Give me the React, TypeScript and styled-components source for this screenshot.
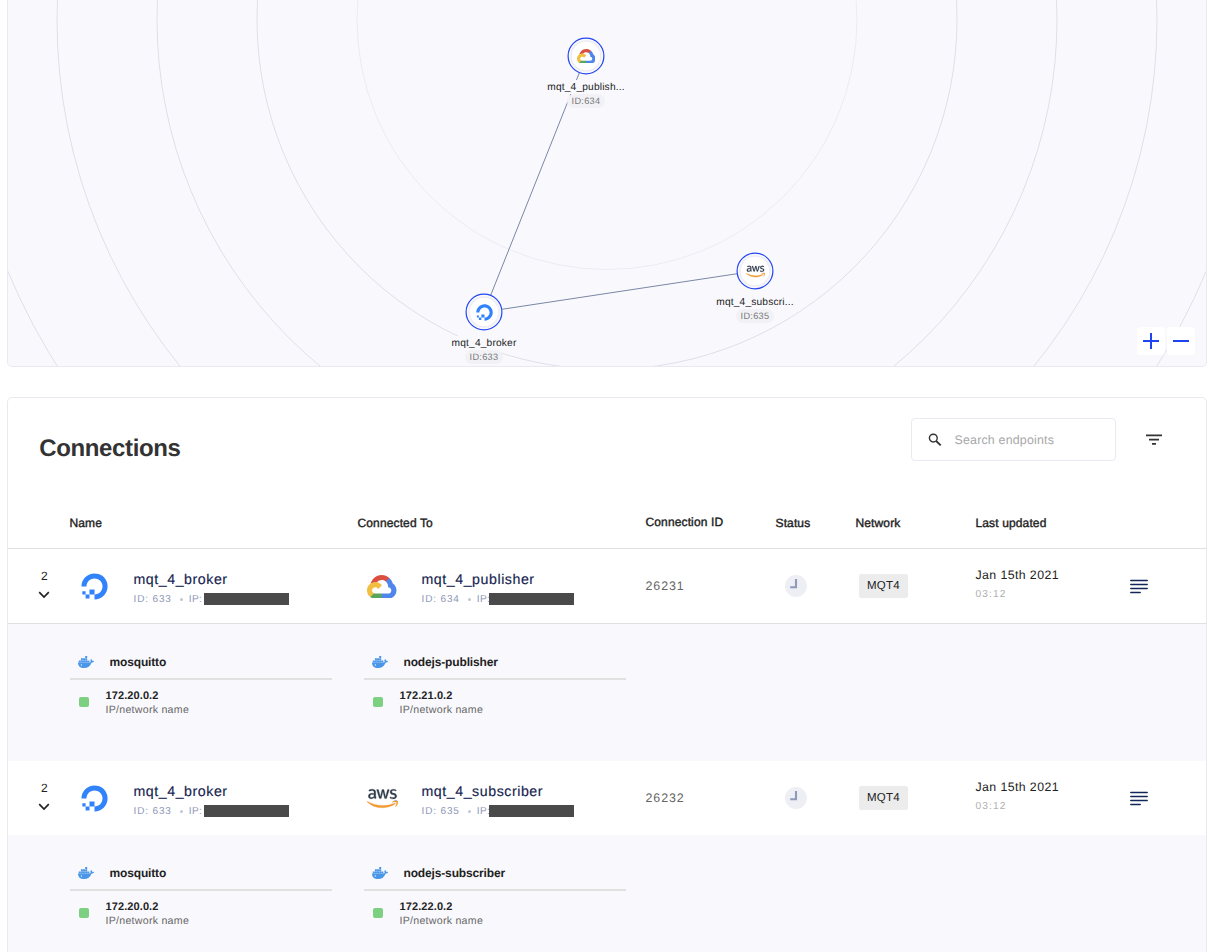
import React from "react";
import styled, { createGlobalStyle } from "styled-components";
import { FaAws, FaDigitalOcean } from "react-icons/fa";

const GlobalStyle = createGlobalStyle`
  * { box-sizing: border-box; }
  html, body { margin: 0; height: 100%; overflow: hidden; background: #fff; }
  body {
    font-family: "Liberation Sans", Arial, sans-serif;
    color: #222;
    text-rendering: geometricPrecision;
  }
`;

const Page = styled.main`
  width: 1218px;
  height: 952px;
  overflow: hidden;
  padding-left: 7px;
  display: flex;
  flex-direction: column;
  gap: 30px;
`;

/* ---------- topology map ---------- */

const MapPanel = styled.section`
  position: relative;
  flex: none;
  width: 1200px;
  height: 367px;
  background: #f9f9fd;
  border: 1px solid #e9e9f2;
  border-top: 0;
  border-radius: 0 0 5px 5px;
  overflow: hidden;
`;

const MapCanvas = styled.svg`
  display: block;
  width: 1198px;
  height: 366px;
`;

const MapNode = styled.div<{ $x: number; $y: number }>`
  position: absolute;
  left: ${(p) => p.$x - 50}px;
  top: ${(p) => p.$y - 18.5}px;
  width: 100px;
  display: flex;
  flex-direction: column;
  align-items: center;
`;

const NodeCircle = styled.svg`
  display: block;
  width: 38px;
  height: 38px;
`;

const NodeBadge = styled.div`
  display: grid;
  width: 38px;
  height: 38px;
  align-items: center;
  justify-items: center;

  > * { grid-area: 1 / 1; }
`;

const NodeLabel = styled.div`
  margin-top: 5px;
  height: 14px;
  line-height: 15px;
  font-size: 10.2px;
  letter-spacing: 0.17px;
  white-space: nowrap;
  background: #f9f9fd;
  color: #222;
`;

const NodeId = styled.div`
  height: 14px;
  line-height: 14px;
  padding: 0 5px;
  border-radius: 7px;
  background: #f2f2f6;
  color: #777;
  font-size: 9.2px;
  letter-spacing: 0.3px;
`;

const ZoomControls = styled.div`
  position: absolute;
  right: 11px;
  bottom: 11px;
  display: flex;
  gap: 2px;
`;

const ZoomButton = styled.button`
  width: 28px;
  height: 28px;
  padding: 0;
  border: 0;
  border-radius: 4px;
  background: #fff;
  display: flex;
  align-items: center;
  justify-content: center;
`;

/* ---------- connections card ---------- */

const Card = styled.section`
  flex: none;
  width: 1200px;
  height: 600px;
  border: 1px solid #e9e9f2;
  border-radius: 5px;
  background: #fff;
`;

const CardHeader = styled.header`
  height: 100px;
  padding: 20px 44px 0 31.3px;
  display: flex;
  align-items: flex-start;
`;

const Title = styled.h2`
  margin: 16px auto 0 0;
  font-size: 24px;
  line-height: 30px;
  letter-spacing: -0.38px;
  color: #333;
`;

const SearchBox = styled.div`
  width: 205px;
  height: 43px;
  border: 1px solid #e9e9f2;
  border-radius: 4px;
  display: flex;
  align-items: center;
  padding-left: 16px;
  gap: 12.5px;
  font-size: 12.4px;
  letter-spacing: 0.2px;
  color: #a8a8a8;
`;

const FilterIcon = styled.svg`
  margin: 16px 0 0 30px;
`;

const rowGrid = `
  display: grid;
  grid-template-columns: 61.5px 288px 288px 130px 80px 120px 1fr;
`;

const HeadRow = styled.div`
  ${rowGrid}
  height: 51px;
  border-bottom: 1px solid #e0e0e0;
`;

const HeadCell = styled.div<{ $raise?: boolean }>`
  padding-top: ${(p) => (p.$raise ? 17 : 18)}px;
  font-size: 12px;
  line-height: 14px;
  letter-spacing: 0.13px;
  color: #1f1f1f;
  -webkit-text-stroke: 0.4px #1f1f1f;
`;

const Row = styled.div<{ $line?: boolean }>`
  ${rowGrid}
  height: ${(p) => (p.$line ? 75 : 74)}px;
  border-bottom: ${(p) => (p.$line ? "1px solid #e0e0e0" : "0")};
`;

const Toggle = styled.div`
  padding: 20px 0 0 24px;
  width: 48.5px;
  display: flex;
  flex-direction: column;
  align-items: center;
  gap: 8px;
  font-size: 12px;
  line-height: 14px;
  margin-right: auto;
`;

const Endpoint = styled.div`
  display: flex;
`;

const LogoSlot = styled.div`
  width: 48px;
  height: 75px;
  padding-left: 1px;
  display: flex;
  align-items: center;
  justify-content: center;
`;

const EndpointText = styled.div`
  padding: 23px 0 0 16px;
`;

const EndpointName = styled.div`
  font-size: 14.2px;
  line-height: 16px;
  letter-spacing: 0.55px;
  color: #14234f;
  -webkit-text-stroke: 0.15px #14234f;
`;

const EndpointMeta = styled.div`
  display: flex;
  align-items: center;
  height: 14px;
  margin-top: 4px;
  font-size: 10px;
  letter-spacing: 0.85px;
  white-space: pre;
  color: #8d97b5;
`;

const Dot = styled.i`
  width: 3px;
  height: 3px;
  border-radius: 50%;
  background: #c4c7d0;
  margin: 0 6px 0 8px;
`;

const MetaIp = styled.span`
  width: 15.5px;
  letter-spacing: 0.45px;
`;

const Redaction = styled.span<{ $gap: number }>`
  width: 85px;
  height: 12px;
  margin-left: ${(p) => p.$gap}px;
  background: #4a4a4a;
`;

const ConnectionId = styled.div`
  padding-top: 30px;
  font-size: 12.4px;
  line-height: 14px;
  letter-spacing: 0.95px;
  color: #666;
`;

const StatusCell = styled.div`
  padding: 26px 0 0 9.5px;
`;

const NetworkCell = styled.div`
  padding: 25px 0 0 3.5px;
`;

const NetworkTag = styled.span`
  display: block;
  width: 49px;
  height: 24px;
  border-radius: 2px;
  background: #ececec;
  font-size: 11.5px;
  line-height: 25px;
  letter-spacing: 0.3px;
  text-align: center;
`;

const Updated = styled.div`
  display: flex;
  padding-top: 19px;
`;

const UpdatedText = styled.div`
  width: 154.5px;
`;

const UpdatedDate = styled.div`
  font-size: 12.3px;
  line-height: 14px;
  letter-spacing: 0.42px;
`;

const UpdatedTime = styled.div`
  margin-top: 6px;
  font-size: 10.2px;
  line-height: 14px;
  letter-spacing: 1.1px;
  color: #b0b0b0;
`;

const MenuIcon = styled.svg`
  margin-top: 11px;
`;

const Details = styled.div<{ $tall?: boolean }>`
  height: ${(p) => (p.$tall ? 137 : 140)}px;
  padding: 28px 0 0 62px;
  background: #f9f9fd;
  display: flex;
  gap: 32px;
`;

const Container = styled.div`
  width: 262px;
`;

const ContainerHead = styled.div`
  height: 28px;
  padding: 0 0 6px 8px;
  border-bottom: 2px solid #e1e1e1;
  display: flex;
  align-items: center;
  gap: 15.5px;
  font-size: 12px;
  font-weight: 700;
  letter-spacing: -0.15px;
  color: #222;
`;

const ContainerBody = styled.div`
  display: flex;
  padding: 9px 0 0 9px;
  gap: 16.5px;
`;

const HealthMark = styled.span`
  width: 10px;
  height: 10px;
  margin-top: 8px;
  border-radius: 2px;
  background: #7dcf82;
`;

const Address = styled.div`
  font-size: 11px;
  line-height: 14px;
  font-weight: 700;
  letter-spacing: 0.1px;
  color: #222;
`;

const AddressHint = styled.div`
  font-size: 10.6px;
  line-height: 14px;
  letter-spacing: 0.27px;
  color: #666;
`;

/* ---------- logos ---------- */

const AwsGlyph = styled(FaAws)`
  path {
    fill: url(#aws-two-tone);
    stroke: url(#aws-two-tone);
    stroke-width: 6px;
  }
`;

const DockerLogo = () => (
  <svg width="16" height="12" viewBox="0 0 16 12">
    <g fill="#4a96e8">
      <path d="M7.2 0h2v1.900h-2zM2.900 2.200h2v2h-2zM5.050 2.200h2v2h-2zM7.200 2.200h2v2h-2zM.750 4.400h2v2h-2zM2.900 4.400h2v2h-2zM5.050 4.400h2v2h-2zM7.200 4.400h2v2h-2zM9.350 4.400h2v2h-2z" />
      <path d="M0 6.500h11.200c.7 0 1.200-.2 1.600-.5-.6-.9-.5-2.100.2-3 .8.500 1.200 1.200 1.200 1.900.7-.1 1.300 0 1.800.3-.4 1-1.300 1.400-2.500 1.500C12.300 10.200 9.700 12 6 12 2.200 12 0 10.200 0 6.500z" />
    </g>
    <circle cx="3.4" cy="8.9" r=".6" fill="#fff" />
  </svg>
);

const GoogleCloudLogo = ({ size }: { size: number }) => (
  <svg width={size} height={size * 0.805} viewBox="0 0 256 206">
    <path fill="#db4f40" d="M170.25 56.82l22.25-22.25 1.49-9.37C153.44-11.68 88.98-7.5 52.42 33.92 42.27 45.42 34.73 59.76 30.72 74.57l7.97-1.12 44.5-7.34 3.44-3.51c19.8-21.74 53.27-24.67 76.13-6.17z" />
    <path fill="#5086ec" d="M224.2 73.92c-5.11-18.84-15.61-35.77-30.21-48.72l-31.23 31.23c13.18 10.77 20.7 27.01 20.38 44.03v5.55c15.35 0 27.8 12.44 27.8 27.8s-12.45 27.48-27.8 27.48h-55.67l-5.47 5.93v33.34l5.47 5.24h55.67c39.93.31 72.55-31.5 72.86-71.43.19-24.2-11.74-46.89-31.8-60.45" />
    <path fill="#58a55c" d="M71.87 205.8h55.6v-44.51h-55.6c-3.96 0-7.8-.85-11.4-2.5l-7.89 2.42-22.4 22.25-1.96 7.58c12.57 9.49 27.9 14.82 43.65 14.76" />
    <path fill="#f2be42" d="M71.87 61.43C31.94 61.66-.24 94.23 0 134.16c.13 22.3 10.55 43.29 28.22 56.88l32.25-32.25c-13.99-6.32-20.21-22.78-13.89-36.77 6.32-13.99 22.79-20.21 36.78-13.89 6.16 2.78 11.1 7.72 13.89 13.89l32.24-32.25C115.77 71.83 94.45 61.34 71.87 61.43" />
  </svg>
);

type Provider = "do" | "gcp" | "aws";

const ProviderLogo = ({ provider, small }: { provider: Provider; small?: boolean }) => {
  if (provider === "do") return <FaDigitalOcean size={small ? 17 : 27} color="#3183fc" />;
  if (provider === "gcp") return <GoogleCloudLogo size={small ? 18.5 : 29.5} />;
  return <AwsGlyph size={small ? 19 : 31} />;
};

/* ---------- data ---------- */

const nodes: { x: number; y: number; label: string; id: number; provider: Provider }[] = [
  { x: 578, y: 55.5, label: "mqt_4_publish...", id: 634, provider: "gcp" },
  { x: 747, y: 270.5, label: "mqt_4_subscri...", id: 635, provider: "aws" },
  { x: 476, y: 311.5, label: "mqt_4_broker", id: 633, provider: "do" },
];

const connections: {
  id: number;
  peer: { name: string; id: number; provider: Provider };
  containers: { name: string; ip: string }[];
}[] = [
  {
    id: 26231,
    peer: { name: "mqt_4_publisher", id: 634, provider: "gcp" },
    containers: [
      { name: "mosquitto", ip: "172.20.0.2" },
      { name: "nodejs-publisher", ip: "172.21.0.2" },
    ],
  },
  {
    id: 26232,
    peer: { name: "mqt_4_subscriber", id: 635, provider: "aws" },
    containers: [
      { name: "mosquitto", ip: "172.20.0.2" },
      { name: "nodejs-subscriber", ip: "172.22.0.2" },
    ],
  },
];

const EndpointCell = ({ name, id, provider, gap }: { name: string; id: number; provider: Provider; gap: number }) => (
  <Endpoint>
    <LogoSlot>
      <ProviderLogo provider={provider} />
    </LogoSlot>
    <EndpointText>
      <EndpointName>{name}</EndpointName>
      <EndpointMeta>
        <span>ID: {id}</span>
        <Dot />
        <MetaIp>IP:</MetaIp>
        <Redaction $gap={gap} />
      </EndpointMeta>
    </EndpointText>
  </Endpoint>
);

export default function App() {
  return (
    <Page>
      <GlobalStyle />
      <svg width="0" height="0" style={{ position: "absolute" }}>
        <defs>
          <linearGradient id="aws-two-tone" x1="0" y1="0" x2="0" y2="1">
            <stop offset="0.61" stopColor="#2f3a4a" />
            <stop offset="0.61" stopColor="#f29a33" />
          </linearGradient>
        </defs>
      </svg>

      <MapPanel>
        <MapCanvas viewBox="0 0 1198 366" fill="none">
          {[250, 350, 450, 550, 650].map((r) => (
            <circle key={r} cx="599" cy="19.5" r={r} stroke={r === 250 ? "#ebebf3" : "#dfdfea"} />
          ))}
          <path d="M578 56L476 312L747 271" stroke="#7b86a6" />
        </MapCanvas>
        {nodes.map((n) => (
          <MapNode key={n.id} $x={n.x} $y={n.y}>
            <NodeBadge>
              <NodeCircle viewBox="0 0 38 38">
                <circle cx="19" cy="19" r="17.9" fill="#f9f9fd" stroke="#2347f2" strokeWidth="1.2" />
                <circle cx="19" cy="19" r="15" fill="#fff" stroke="#ededf3" strokeWidth="1.5" />
              </NodeCircle>
              <ProviderLogo provider={n.provider} small />
            </NodeBadge>
            <NodeLabel>{n.label}</NodeLabel>
            <NodeId>ID:{n.id}</NodeId>
          </MapNode>
        ))}
        <ZoomControls>
          <ZoomButton aria-label="Zoom in">
            <svg width="16" height="16" stroke="#1d44ee" strokeWidth="2">
              <path d="M0 8h16M8 0v16" />
            </svg>
          </ZoomButton>
          <ZoomButton aria-label="Zoom out">
            <svg width="16" height="16" stroke="#1d44ee" strokeWidth="2">
              <path d="M0 8h16" />
            </svg>
          </ZoomButton>
        </ZoomControls>
      </MapPanel>

      <Card>
        <CardHeader>
          <Title>Connections</Title>
          <SearchBox>
            <svg width="14" height="14" viewBox="0 0 14 14" fill="none" stroke="#333" strokeWidth="1.4">
              <circle cx="5.3" cy="5.1" r="3.9" />
              <path d="M8.2 8L12.7 12.4" strokeWidth="1.8" />
            </svg>
            Search endpoints
          </SearchBox>
          <FilterIcon width="16" height="11" stroke="#333" strokeWidth="1.7">
            <path d="M0 1.3h16M3 5.6h10M6 9.8h4" />
          </FilterIcon>
        </CardHeader>

        <HeadRow>
          <span />
          <HeadCell>Name</HeadCell>
          <HeadCell>Connected To</HeadCell>
          <HeadCell $raise>Connection ID</HeadCell>
          <HeadCell>Status</HeadCell>
          <HeadCell>Network</HeadCell>
          <HeadCell>Last updated</HeadCell>
        </HeadRow>

        {connections.map((c, i) => (
          <React.Fragment key={c.id}>
            <Row $line={i === 0}>
              <Toggle>
                2
                <svg width="12" height="8" fill="none" stroke="#222" strokeWidth="1.7">
                  <path d="M1.2 1.2L6 6L10.8 1.2" />
                </svg>
              </Toggle>
              <EndpointCell name="mqt_4_broker" id={633} provider="do" gap={0} />
              <EndpointCell {...c.peer} gap={-3} />
              <ConnectionId>{c.id}</ConnectionId>
              <StatusCell>
                <svg width="22" height="22" fill="none">
                  <circle cx="11" cy="11" r="11" fill="#eeeef5" />
                  <path d="M11 4v8.200H5.200" stroke="#8f9bb8" strokeWidth="2.1" />
                </svg>
              </StatusCell>
              <NetworkCell>
                <NetworkTag>MQT4</NetworkTag>
              </NetworkCell>
              <Updated>
                <UpdatedText>
                  <UpdatedDate>Jan 15th 2021</UpdatedDate>
                  <UpdatedTime>03:12</UpdatedTime>
                </UpdatedText>
                <MenuIcon width="18" height="15" stroke="#14275a" strokeWidth="1.5" strokeLinecap="round">
                  <path d="M.8 1.5h16.4M.8 5.5h16.4M.8 9.5h16.4M.8 13.5h9.4" />
                </MenuIcon>
              </Updated>
            </Row>
            <Details $tall={i === 0}>
              {c.containers.map((k) => (
                <Container key={k.name}>
                  <ContainerHead>
                    <DockerLogo />
                    {k.name}
                  </ContainerHead>
                  <ContainerBody>
                    <HealthMark />
                    <div>
                      <Address>{k.ip}</Address>
                      <AddressHint>IP/network name</AddressHint>
                    </div>
                  </ContainerBody>
                </Container>
              ))}
            </Details>
          </React.Fragment>
        ))}
      </Card>
    </Page>
  );
}
